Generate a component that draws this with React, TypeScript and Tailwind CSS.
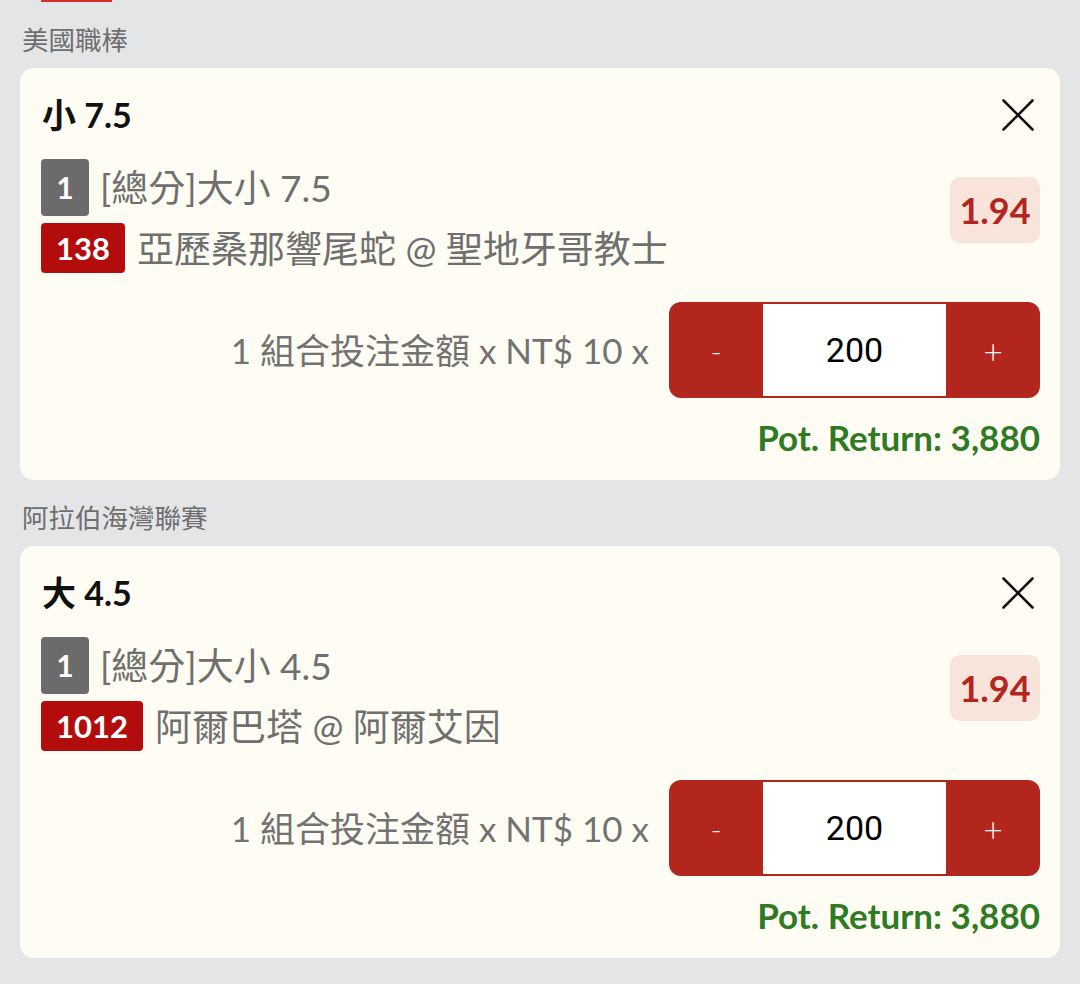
import React from 'react';

type Bet = {
  league: string;
  title: string;
  market: string;
  code: string;
  match: string;
  odds: string;
  stake: number;
  ret: string;
};

const bets: Bet[] = [
  {
    league: '美國職棒',
    title: '小 7.5',
    market: '[總分]大小 7.5',
    code: '138',
    match: '亞歷桑那響尾蛇 @ 聖地牙哥教士',
    odds: '1.94',
    stake: 200,
    ret: '3,880',
  },
  {
    league: '阿拉伯海灣聯賽',
    title: '大 4.5',
    market: '[總分]大小 4.5',
    code: '1012',
    match: '阿爾巴塔 @ 阿爾艾因',
    odds: '1.94',
    stake: 200,
    ret: '3,880',
  },
];

function CloseIcon() {
  return (
    <svg width="32" height="32" viewBox="0 0 32 32" className="shrink-0">
      <path d="M1.5 1.5 L30.5 30.5 M30.5 1.5 L1.5 30.5" stroke="#111" strokeWidth="2.6" strokeLinecap="round" />
    </svg>
  );
}

function BetCard({ bet }: { bet: Bet }) {
  return (
    <section className="mb-5">
      {/* league label */}
      <div className="h-[36px] leading-[36px] text-[26.5px] text-[#6e6e6e] pl-[2px]">{bet.league}</div>

      <div className="mt-[10px] h-[412px] rounded-[14px] bg-[#fffdf3] pl-[21px] pr-[20px] pt-[24px] flex flex-col">
        {/* title + close */}
        <div className="flex items-center justify-between h-[46px] pr-[6px]">
          <h2 className="text-[34px] font-bold text-[#111] leading-[46px] pl-px">{bet.title}</h2>
          <CloseIcon />
        </div>

        {/* selection rows + odds */}
        <div className="mt-[21px] flex items-start justify-between">
          <div className="flex flex-col gap-[7px]">
            <div className="flex items-center h-[57px]">
              <span className="w-[48px] h-[57px] rounded-[4px] bg-[#6b6b6b] text-white font-bold text-[30px] flex items-center justify-center">
                1
              </span>
              <span className="ml-[11px] text-[37px] text-[#6f6f6f] leading-none">{bet.market}</span>
            </div>
            <div className="flex items-center h-[50px]">
              <span className="h-[50px] px-[15px] rounded-[4px] bg-[#b30c0c] text-white font-bold text-[31px] flex items-center justify-center">
                {bet.code}
              </span>
              <span className="ml-[12px] text-[37px] text-[#6f6f6f] leading-none">{bet.match}</span>
            </div>
          </div>
          <div className="mt-[18px] w-[90px] h-[66px] rounded-[10px] bg-[#f9e4dc] flex items-center justify-center text-[36px] font-bold text-[#b3261e]">
            {bet.odds}
          </div>
        </div>

        {/* stake */}
        <div className="mt-[29px] flex items-center justify-end gap-5">
          <span className="text-[35px] text-[#727272]">1 組合投注金額 x NT$ 10 x</span>
          <div className="flex h-[96px] w-[371px] rounded-[12px] bg-[#b3261e] overflow-hidden">
            <button className="w-[94px] flex items-center justify-center text-white text-[30px] font-light">-</button>
            <div className="my-[2px] w-[183px] bg-white flex items-center justify-center font-['Roboto',sans-serif] text-[34px] text-black">
              {bet.stake}
            </div>
            <button className="w-[94px] flex items-center justify-center text-white text-[34px] font-light">+</button>
          </div>
        </div>

        {/* potential return */}
        <div className="mt-[19px] h-[40px] leading-[40px] text-right text-[35px] font-bold text-[#2f7a24]">
          Pot. Return: {bet.ret}
        </div>
      </div>
    </section>
  );
}

export default function App() {
  return (
    <div className="min-h-screen bg-[#e4e5e7] font-['Lato','Noto_Sans_CJK_TC',sans-serif]">
      <div className="h-[2px] w-[71px] ml-[41px] bg-[#d32f2f]" />
      <div className="px-5 pt-5">
        {bets.map((b) => (
          <BetCard key={b.code} bet={b} />
        ))}
      </div>
    </div>
  );
}
